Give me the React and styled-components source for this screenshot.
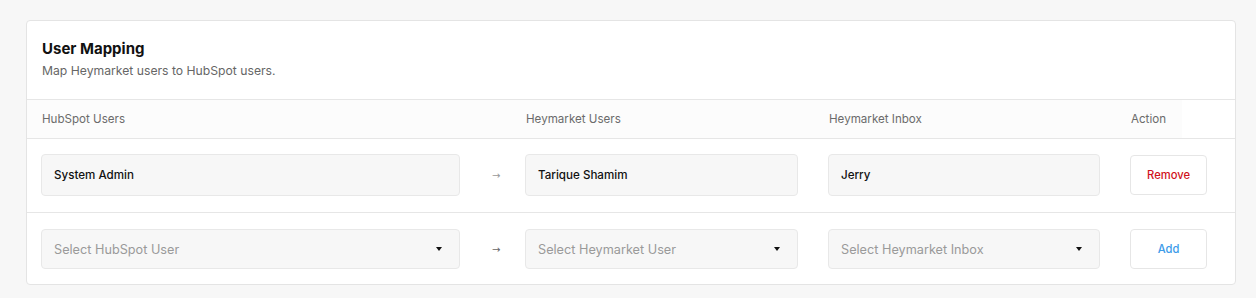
import React from "react";
import styled, { createGlobalStyle } from "styled-components";

const Global = createGlobalStyle`
  html, body { margin: 0; padding: 0; background: #f7f7f7; }
  body { font-family: "Inter", "Liberation Sans", sans-serif; color: #111; -webkit-font-smoothing: antialiased; }
  * { box-sizing: border-box; }
`;

const Page = styled.div`
  padding: 20px 20px 13px 26px;
`;

const Card = styled.section`
  background: #fff;
  border: 1px solid #e4e4e4;
  border-radius: 4px;
  overflow: hidden;
`;

const Intro = styled.div`
  padding: 18px 15px 19px;
`;

const Title = styled.h2`
  margin: 0;
  font-size: 15px;
  line-height: 20px;
  font-weight: 700;
  color: #111;
`;

const Subtitle = styled.p`
  margin: 3px 0 0;
  font-size: 12.2px;
  line-height: 18px;
  color: #666;
`;

const cols = "448px 35px 303px 302px";

const HeadWrap = styled.div`
  border-top: 1px solid #e6e6e6;
  border-bottom: 1px solid #e6e6e6;
`;

const HeadRow = styled.div`
  display: inline-grid;
  grid-template-columns: ${cols} 67px;
  background: #fcfcfc;
  vertical-align: top;
`;

const HeadCell = styled.div`
  padding: 0 15px 0 16px;
  height: 38px;
  display: flex;
  align-items: center;
  font-size: 11.6px;
  color: #6b6b6b;
  white-space: nowrap;
  &:first-child { padding-left: 15px; }
`;

const Row = styled.div`
  display: grid;
  grid-template-columns: ${cols} 107px;
  align-items: center;
  padding: ${(p) => (p.$last ? "16px 0 15px" : "15px 0 16px")};
  border-bottom: ${(p) => (p.$last ? "none" : "1px solid #e6e6e6")};
`;

const Cell = styled.div`
  padding: 0 15px;
  display: flex;
  align-items: center;
  &:first-child { padding-left: 14px; }
`;

const Field = styled.div`
  flex: 1;
  height: ${(p) => (p.$select ? "40px" : "42px")};
  background: #f7f7f7;
  border: 1px solid #e8e8e8;
  border-radius: 4px;
  display: flex;
  align-items: center;
  justify-content: space-between;
  padding: 0 17px 0 12px;
  font-size: ${(p) => (p.$placeholder ? "12.7px" : "11.6px")};
  font-weight: ${(p) => (p.$placeholder ? 400 : 500)};
  color: ${(p) => (p.$placeholder ? "#9a9a9a" : "#111")};
`;

const Caret = styled.span`
  width: 0;
  height: 0;
  border-left: 3.5px solid transparent;
  border-right: 3.5px solid transparent;
  border-top: 4px solid #111;
`;

const Arrow = styled.span`
  font-size: 10px;
  color: ${(p) => (p.$dark ? "#666" : "#999")};
  padding-left: 2px;
  font-family: "DejaVu Sans", sans-serif;
`;

const Button = styled.button`
  width: 77px;
  height: 40px;
  background: #fff;
  border: 1px solid #e6e6e6;
  border-radius: 4px;
  font-family: inherit;
  font-size: 11.2px;
  font-weight: 500;
  color: ${(p) => p.$color};
  cursor: pointer;
`;

const Select = ({ placeholder }) => (
  <Field $select $placeholder>
    <span>{placeholder}</span>
    <Caret />
  </Field>
);

export default function App() {
  return (
    <>
      <Global />
      <Page>
        <Card>
          <Intro>
            <Title>User Mapping</Title>
            <Subtitle>Map Heymarket users to HubSpot users.</Subtitle>
          </Intro>
          <HeadWrap>
            <HeadRow>
              <HeadCell>HubSpot Users</HeadCell>
              <HeadCell />
              <HeadCell>Heymarket Users</HeadCell>
              <HeadCell>Heymarket Inbox</HeadCell>
              <HeadCell>Action</HeadCell>
            </HeadRow>
          </HeadWrap>
          <Row>
            <Cell><Field>System Admin</Field></Cell>
            <Cell><Arrow>→</Arrow></Cell>
            <Cell><Field>Tarique Shamim</Field></Cell>
            <Cell><Field>Jerry</Field></Cell>
            <Cell><Button $color="#d0111b">Remove</Button></Cell>
          </Row>
          <Row $last>
            <Cell><Select placeholder="Select HubSpot User" /></Cell>
            <Cell><Arrow $dark>→</Arrow></Cell>
            <Cell><Select placeholder="Select Heymarket User" /></Cell>
            <Cell><Select placeholder="Select Heymarket Inbox" /></Cell>
            <Cell><Button $color="#3d9be9">Add</Button></Cell>
          </Row>
        </Card>
      </Page>
    </>
  );
}
